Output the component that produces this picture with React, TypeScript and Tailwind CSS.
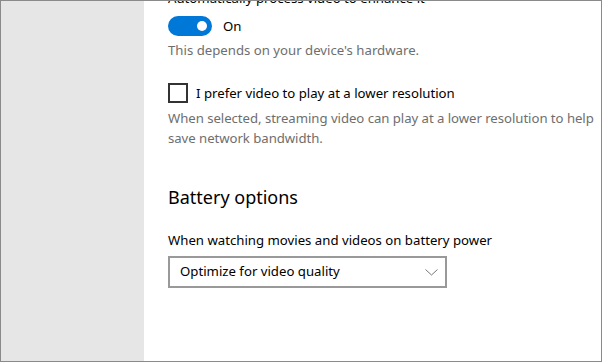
const font = { fontFamily: '"Noto Sans", "Open Sans", sans-serif' };

export default function App() {
  return (
    <div
      className="flex h-[362px] w-[602px] overflow-hidden border border-[#8a8a8a] bg-white text-[13.2px] text-black"
      style={font}
    >
      {/* Left navigation pane (empty in this view) */}
      <div className="w-[143px] shrink-0 bg-[#e6e6e6]" />

      <div className="flex-1 pl-[24px]">
        <div className="-mt-[13px] h-[20px] leading-[20px] whitespace-nowrap">
          Automatically process video to enhance it
        </div>

        {/* Toggle */}
        <div className="mt-[8px] flex h-[20px] items-center gap-[11px]">
          <div className="flex h-[20px] w-[44px] items-center justify-end rounded-full bg-[#0078d7] pr-[5px]">
            <div className="h-[10px] w-[10px] rounded-full bg-white" />
          </div>
          <span className="leading-[20px]">On</span>
        </div>
        <p className="mt-[4px] leading-[20px] text-[#6e6e6e]">
          This depends on your device's hardware.
        </p>

        {/* Checkbox */}
        <label className="mt-[23px] flex h-[20px] items-center gap-[8px]">
          <span className="h-[20px] w-[20px] border-2 border-[#333333]" />
          <span className="leading-[20px]">I prefer video to play at a lower resolution</span>
        </label>
        <p className="mt-[5px] leading-[20px] tracking-[-0.05px] text-[#6e6e6e]">
          When selected, streaming video can play at a lower resolution to help save network
          bandwidth.
        </p>

        {/* Battery options */}
        <h2 className="mt-[35px] text-[18px] leading-[28px]">Battery options</h2>
        <p className="mt-[19px] leading-[20px]">
          When watching movies and videos on battery power
        </p>
        <div className="mt-[6px] flex h-[32px] w-[279px] items-center justify-between border-2 border-[#999999] pl-[10px] pr-[7px]">
          <span>Optimize for video quality</span>
          <svg width="13" height="7" viewBox="0 0 13 7" fill="none">
            <polyline points="0.5,0.5 6.5,6 12.5,0.5" stroke="#777777" strokeWidth="1" />
          </svg>
        </div>
      </div>
    </div>
  );
}
